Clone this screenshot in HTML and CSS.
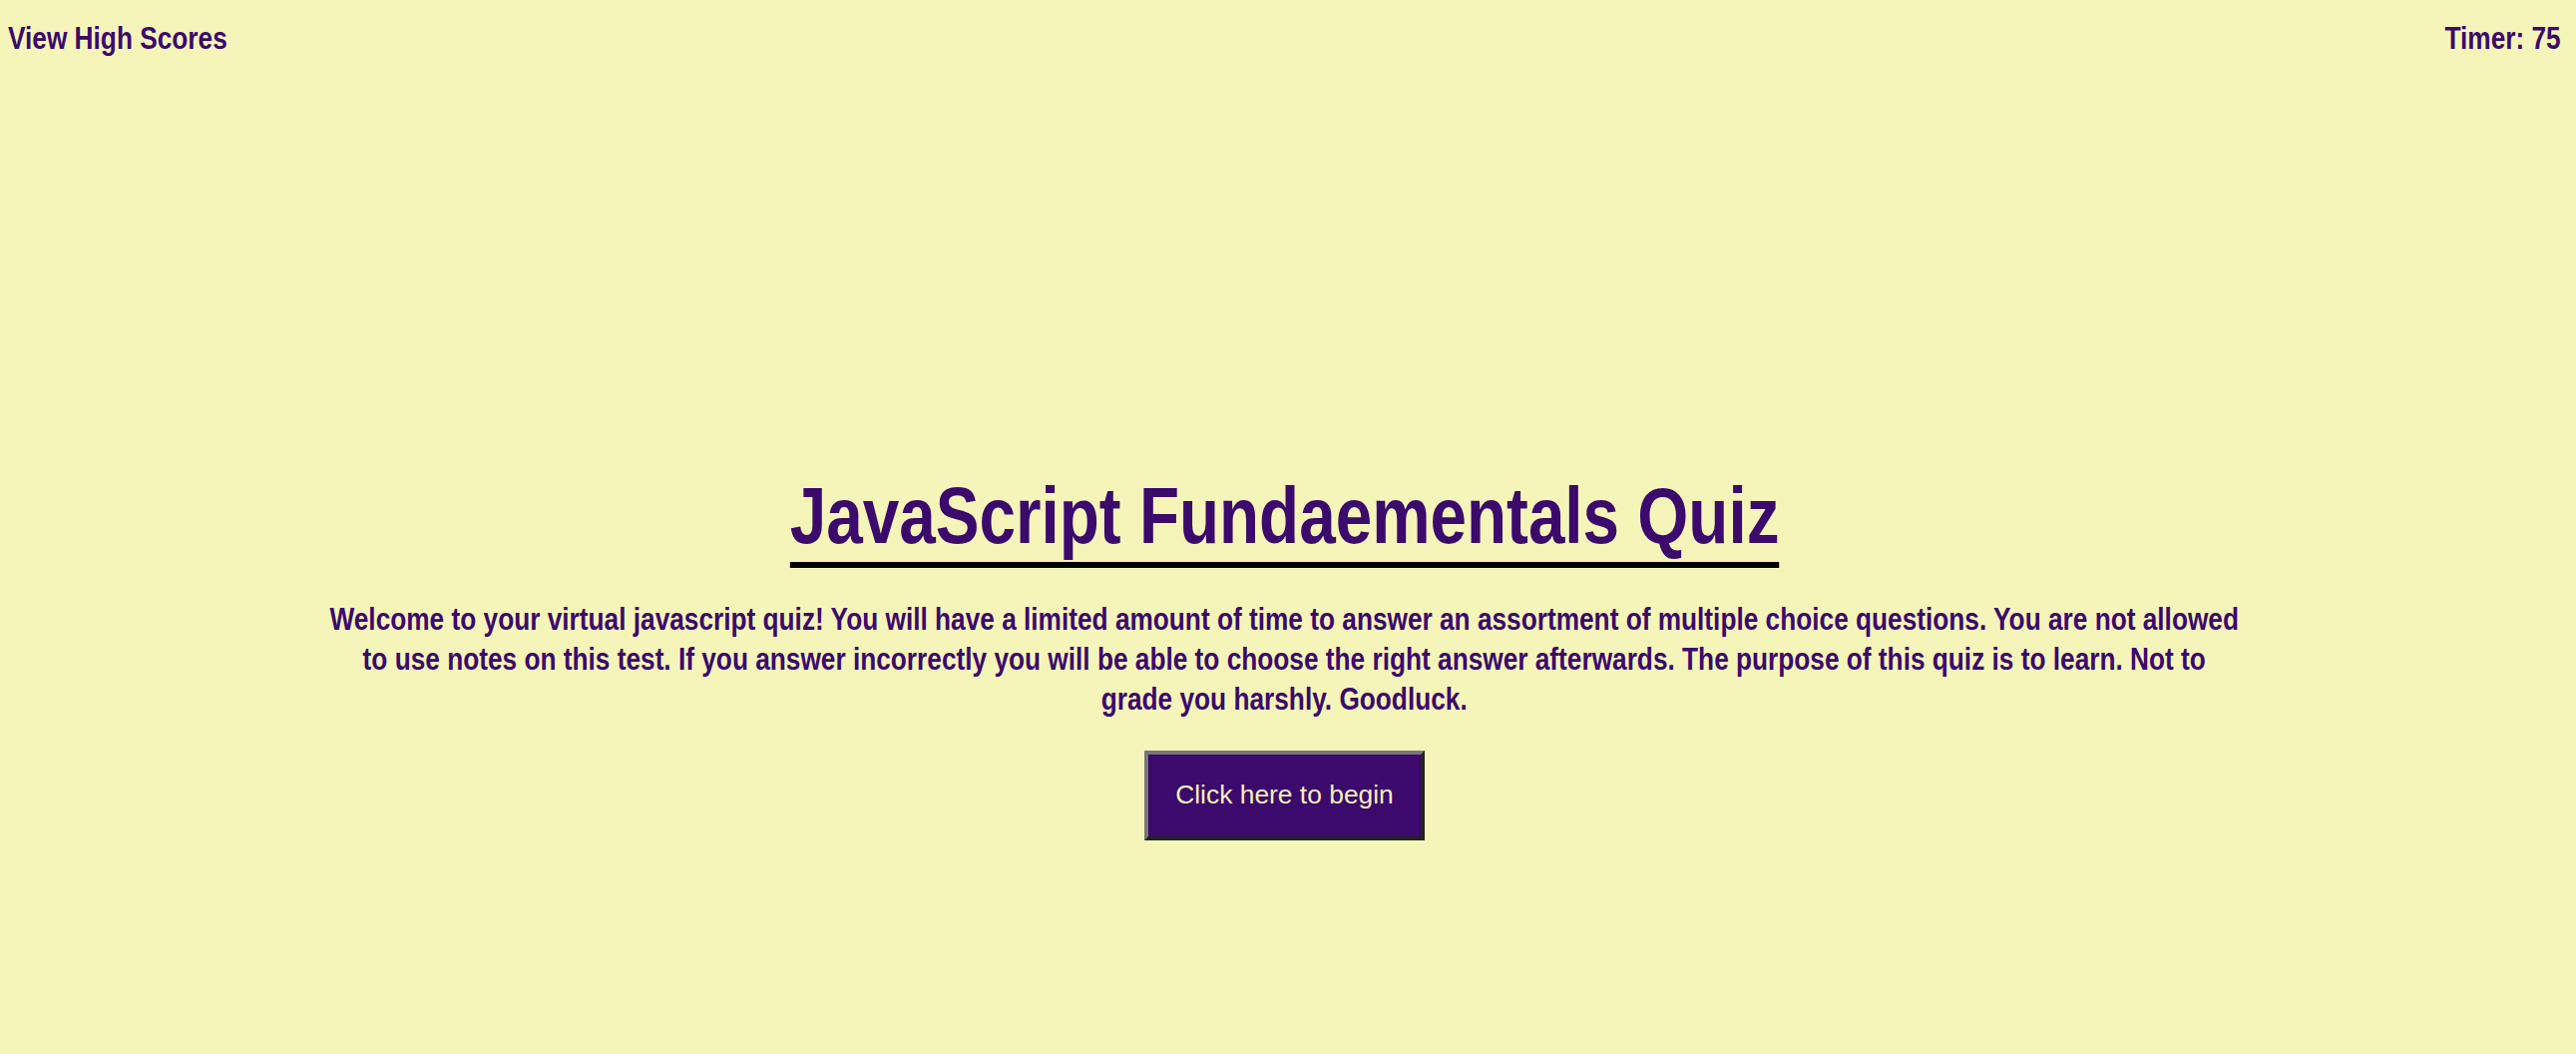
FILE: index.html
```html
<!DOCTYPE html>
<html lang="en">
<head>
<meta charset="utf-8">
<title>JavaScript Fundaementals Quiz</title>
<link rel="stylesheet" href="styles.css">
</head>
<body>
  <header class="topbar">
    <a class="highscores narrow" href="#">View High Scores</a>
    <div class="timer narrow">Timer: 75</div>
  </header>
  <main class="intro">
    <h1 class="title narrow">JavaScript Fundaementals Quiz</h1>
    <p class="lead narrow">Welcome to your virtual javascript quiz! You will have a limited amount of time to answer an assortment of multiple choice questions. You are not allowed to use notes on this test. If you answer incorrectly you will be able to choose the right answer afterwards. The purpose of this quiz is to learn. Not to grade you harshly. Goodluck.</p>
    <button class="start" type="button">Click here to begin</button>
  </main>
</body>
</html>
```

FILE: styles.css
```css
html, body {
  height: 100%;
}

body {
  margin: 0;
  padding: 20px 15px 0 8px;
  box-sizing: border-box;
  background: #f5f5b9;
  color: #3c096c;
  font-family: "Liberation Sans", Arial, sans-serif;
  font-weight: 700;
}

/* Arial Narrow look: Arial/Liberation Sans compressed to 82% width */
.narrow {
  transform: scaleX(0.82);
}

.topbar {
  display: flex;
  justify-content: space-between;
  align-items: baseline;
  font-size: 32px;
  line-height: normal;
}

.highscores {
  color: #3c096c;
  text-decoration: none;
  transform-origin: left center;
}

.timer {
  transform-origin: right center;
}

.intro {
  display: flex;
  flex-direction: column;
  align-items: center;
  margin-top: 414px;
}

.title {
  margin: 0;
  font-size: 80px;
  font-weight: 700;
  line-height: normal;
  border-bottom: 6px solid #000;
  transform-origin: center;
}

.lead {
  margin: 31px 0 0;
  width: 91.46%;
  text-align: center;
  font-size: 32px;
  line-height: 40px;
  transform-origin: center;
}

.start {
  margin-top: 32px;
  padding: 25px 27px 26px;
  background: #3c096c;
  color: #f5f0b8;
  font-family: "Liberation Sans", Arial, sans-serif;
  font-weight: 400;
  font-size: 26.4px;
  line-height: normal;
  border-width: 4px;
  border-style: solid;
  border-color: #777 #222 #222 #777;
  cursor: pointer;
}
```
